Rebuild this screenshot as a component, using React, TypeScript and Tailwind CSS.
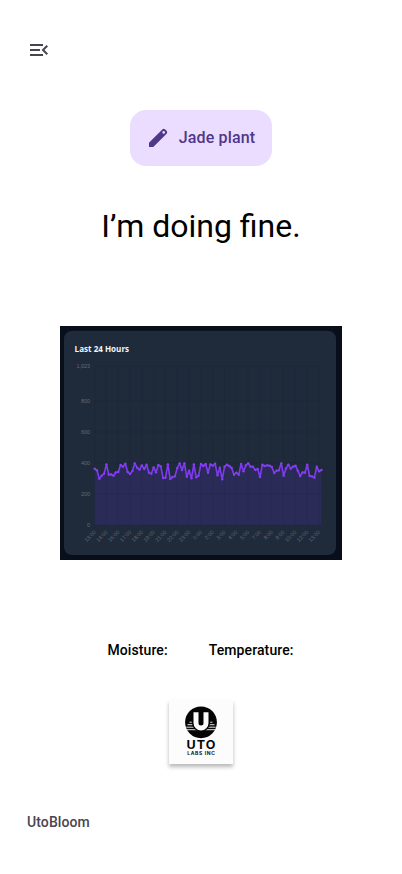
const READINGS = [
  86, 91, 116, 107, 101, 73, 104, 103, 107, 97, 96, 75, 80, 71, 96, 102, 93, 70, 83, 89, 76, 87, 74, 98,
  101, 82, 97, 75, 79, 114, 113, 73, 117, 111, 109, 84, 70, 90, 70, 110, 92, 115, 73, 112, 107, 72, 78, 72,
  98, 73, 77, 71, 106, 83, 118, 80, 74, 78, 84, 104, 98, 104, 72, 94, 76, 70, 80, 80, 90, 87, 111, 74, 78,
  76, 77, 81, 99, 92, 91, 70, 107, 85, 74, 86, 80, 77, 92, 108, 97, 98, 74, 108, 109, 113, 80, 94, 90,
];

const HOURS = [
  '13:00', '14:00', '16:00', '17:00', '18:00', '19:00', '21:00', '22:00', '23:00', '0:00', '2:00',
  '3:00', '4:00', '5:00', '7:00', '8:00', '9:00', '10:00', '12:00', '13:00',
];

const LEVELS: [string, number][] = [
  ['1,023', 40.4],
  ['800', 75],
  ['600', 106],
  ['400', 137],
  ['200', 168],
  ['0', 199],
];

const LEFT = 34.6;
const BASE = 199;
const points = READINGS.map((v, i) => [LEFT + i * 2.363, 114 + v / 3] as const);
const line = points.map(([x, y]) => `${x.toFixed(2)},${y.toFixed(2)}`).join(' ');
const right = points[points.length - 1][0];

function MenuOpenIcon() {
  return (
    <svg viewBox="0 0 24 24" className="size-6" fill="#49454f">
      <path d="M3 18h13v-2H3v2zM3 13h10v-2H3v2zM3 6v2h13V6H3zm18 9.59L17.42 12 21 8.41 19.59 7l-5 5 5 5L21 15.59z" />
    </svg>
  );
}

function PencilIcon() {
  return (
    <svg viewBox="0 0 24 24" className="size-6" fill="#4f378a">
      <path
        fillRule="evenodd"
        d="M3 16.75V21h4.25L20.600 7.650a2 2 0 0 0 0-2.830l-1.420-1.420a2 2 0 0 0-2.830 0L3 16.750zM17.700 5.100a1.300 1.300 0 1 1 0 2.600 1.300 1.300 0 0 1 0-2.600z"
      />
    </svg>
  );
}

function HistoryChart() {
  return (
    <div className="h-[234px] w-[282px] bg-[#080e1a]">
      <svg viewBox="0 0 282 234" className="block size-full">
        <rect x="4" y="4.7" width="272" height="224.3" rx="8" fill="#1f2a3b" />
        <text
          x="14.6"
          y="25.5"
          fill="#f1f5f9"
          textLength="54.5"
          lengthAdjust="spacingAndGlyphs"
          className="font-['Open_Sans','Noto_Sans',sans-serif] text-[8.2px] font-bold"
        >
          Last 24 Hours
        </text>
        <g stroke="#1c2737" strokeWidth="0.5">
          {LEVELS.map(([label, y]) => (
            <line key={label} x1={LEFT} x2={right} y1={y} y2={y} />
          ))}
          {HOURS.map((_, i) => (
            <line key={i} x1={LEFT + i * 11.8} x2={LEFT + i * 11.8} y1="40" y2={BASE} />
          ))}
        </g>
        <polygon points={`${LEFT},${BASE} ${line} ${right},${BASE}`} fill="#6530e4" fillOpacity="0.16" />
        <polyline points={line} fill="none" stroke="#7e3aed" strokeWidth="1.65" strokeLinejoin="round" />
        <g fill="#853df5">
          {points.map(([x, y], i) => (
            <circle key={i} cx={x} cy={y} r="1.2" />
          ))}
        </g>
        <g fill="#686b70" className="font-['Liberation_Sans',sans-serif] text-[5.4px]">
          {LEVELS.map(([label, y]) => (
            <text key={label} x="30" y={y + 1.7} textAnchor="end">
              {label}
            </text>
          ))}
          {HOURS.map((hour, i) => {
            const x = LEFT + i * 11.8;
            return (
              <text key={i} x={x + 1.6} y="206.6" textAnchor="end" transform={`rotate(-45 ${x + 1.6} 206.6)`}>
                {hour}
              </text>
            );
          })}
        </g>
      </svg>
    </div>
  );
}

function UtoLogo() {
  return (
    <div className="size-16 bg-[#fcfcfc] shadow-[0_3px_4px_rgba(0,0,0,0.28)]">
      <svg viewBox="0 0 64 64" className="block size-full">
        <circle cx="32" cy="22.3" r="15.9" fill="#050505" />
        <path
          d="M20.5 22.2h23M18.5 24.7h27M17.3 27.2h29.4M18 29.7h28"
          stroke="#fcfcfc"
          strokeWidth="0.9"
        />
        <path d="M27 11v11.5a5 5 0 0 0 10 0V11" fill="#050505" stroke="#050505" strokeWidth="8.4" />
        <path d="M27 12.3v10.7a5 5 0 0 0 10 0V12.3" fill="none" stroke="#fcfcfc" strokeWidth="5" />
        <text
          x="17.4"
          y="48.8"
          textLength="30"
          lengthAdjust="spacingAndGlyphs"
          fill="#050505"
          className="font-['Inter','Liberation_Sans',sans-serif] text-[11.5px] font-bold tracking-[1px]"
        >
          UTO
        </text>
        <text
          x="18.2"
          y="54.8"
          textLength="28.4"
          lengthAdjust="spacingAndGlyphs"
          fill="#111"
          className="font-['Inter','Liberation_Sans',sans-serif] text-[4.6px] font-bold tracking-[0.6px]"
        >
          LABS INC
        </text>
      </svg>
    </div>
  );
}

export default function App() {
  return (
    <main className="flex h-[874px] w-[402px] flex-col items-center overflow-hidden bg-white font-['Roboto',sans-serif]">
      <header className="flex w-full pt-[38px] pl-[27px]">
        <button aria-label="Open menu">
          <MenuOpenIcon />
        </button>
      </header>
      <button className="mt-12 flex h-14 w-[141.4px] shrink-0 items-center gap-[8.5px] rounded-2xl bg-[#eaddff] pl-4 text-base font-medium tracking-[0.15px] text-[#4f378a]">
        <PencilIcon />
        <span className="whitespace-nowrap">Jade plant</span>
      </button>
      <h1 className="mt-10 text-[32px] leading-10 text-black">I’m doing fine.</h1>
      <section className="mt-20">
        <HistoryChart />
      </section>
      <dl className="mt-20 mr-px flex gap-[41px] text-sm leading-5 font-medium tracking-[0.1px] text-black">
        <dt>Moisture:</dt>
        <dt>Temperature:</dt>
      </dl>
      <div className="mt-10">
        <UtoLogo />
      </div>
      <footer className="mt-12 w-full pl-[27px] text-sm leading-5 font-medium tracking-[0.1px] text-[#49454f]">
        UtoBloom
      </footer>
    </main>
  );
}
